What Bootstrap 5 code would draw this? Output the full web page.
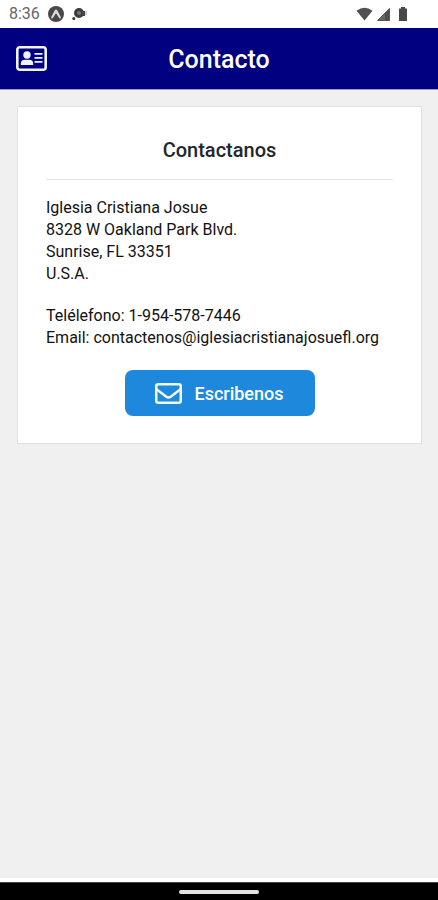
<!DOCTYPE html>
<html lang="es">
<head>
<meta charset="utf-8">
<meta name="viewport" content="width=device-width, initial-scale=1">
<title>Contacto</title>
<link href="https://cdn.jsdelivr.net/npm/bootstrap@5.3.0/dist/css/bootstrap.min.css" rel="stylesheet">
<style>
  body { font-family: Roboto, "Liberation Sans", sans-serif; background: #f0f0f0; color: #111; }
  .status-bar { height: 28px; padding: 0 30px 0 9px; color: #666; font-size: 16px; line-height: 28px; background: #fff; }
  .app-header { height: 62px; background: #000080; border-bottom: 1px solid #9c9ccb; display: grid; grid-template-columns: 32px 1fr 32px; padding: 0 16px; }
  .app-header h1 { font-size: 25px; font-weight: 500; line-height: 32px; padding-top: 2px; }
  .page-body { padding: 16px 16px 16px 17px; }
  .contact-card { border: 1px solid #dfe1e1; padding: 29px 28px 27px; }
  .contact-card h2 { font-size: 20px; font-weight: 500; line-height: 28px; color: #24262b; padding-bottom: 15px; margin-bottom: 17px; border-bottom: 1px solid #e4e4e4; }
  .contact-info { font-size: 16px; line-height: 22px; }
  .write-row { padding-top: 21px; }
  .btn-write { --bs-btn-color: #fff; --bs-btn-bg: #1e88dd; --bs-btn-hover-color: #fff; --bs-btn-hover-bg: #1976c4; --bs-btn-border-radius: 8px; width: 190px; height: 46px; font-size: 18px; font-weight: 500; }
  .nav-strip { height: 18px; background: #000; border-top: 1px solid #444; }
  .home-handle { width: 80px; height: 4px; background: #e4e4e2; }
</style>
<script src="https://cdn.jsdelivr.net/npm/bootstrap@5.3.0/dist/js/bootstrap.bundle.min.js" defer></script>
</head>
<body class="d-flex flex-column min-vh-100">
  <div class="status-bar d-flex align-items-center">
    <span class="me-2">8:36</span>
    <svg class="me-2" width="16" height="16" viewBox="0 0 16 16" aria-hidden="true"><circle cx="8" cy="8" r="8" fill="#484848"/><path d="M3 11.5 6.8 4.3Q8 2.5 9.2 4.3L13 11.5Q12 13.5 10.8 11.6L8 7.5 5.2 11.6Q4 13.5 3 11.5Z" fill="#ddd"/><path d="M8 7.5 9.6 10 8 12.5 6.4 10Z" fill="#484848"/></svg>
    <svg width="16" height="14" viewBox="0 0 16 14" aria-hidden="true"><circle cx="7" cy="6" r="3.5" fill="#777" stroke="#3c3c3c" stroke-width="3"/><circle cx="1.800" cy="11.500" r="1.500" fill="#333"/><path d="M10 4h3v5h-3z" fill="#444"/><path d="M14 4v4" stroke="#aaa"/></svg>
    <svg class="ms-auto" width="17" height="14" viewBox="0 0 17 14" aria-hidden="true"><path d="M.5 3.8Q8.500-2.300 16.500 3.800L8.500 13.500Z" fill="#505050"/></svg>
    <svg class="ms-1" width="13" height="13" viewBox="0 0 13 13" aria-hidden="true"><path d="M12.500.5v12H.5Z" fill="#666"/><path d="M8 5 12.500.5v12H8Z" fill="#505050"/><path d="M12.500.5v12H.5Z" fill="none" stroke="#555"/></svg>
    <svg class="ms-2" width="10" height="14" viewBox="0 0 10 14" aria-hidden="true"><path d="M3 0h4v1.500h2V14H1V1.500h2Z" fill="#484848"/></svg>
  </div>

  <header class="app-header align-items-center text-white">
    <svg width="31" height="25" viewBox="0 0 31 25" role="img" aria-label="Tarjeta de contacto"><rect x="1.300" y="1.300" width="28.400" height="22.400" rx="2.500" fill="none" stroke="#f1f3ff" stroke-width="2.600"/><g fill="#f1f3ff"><circle cx="11" cy="9" r="3.700"/><path d="M4.800 19v-1.300q0-4 4-4h4.400q4 0 4 4V19Z"/><path d="M18.500 7h8v1.800h-8zM18.500 11h8v1.800h-8zM18.500 15h8v1.800h-8z"/></g></svg>
    <h1 class="m-0 text-center">Contacto</h1>
  </header>

  <main class="page-body flex-grow-1">
    <section class="contact-card bg-white">
      <h2 class="text-center">Contactanos</h2>
      <div class="contact-info">
        <address class="mb-0">Iglesia Cristiana Josue<br>8328 W Oakland Park Blvd.<br>Sunrise, FL 33351<br>U.S.A.</address>
        <p class="mt-3 pt-1 mb-0">Telélefono: 1-954-578-7446<br>Email: contactenos@iglesiacristianajosuefl.org</p>
      </div>
      <div class="write-row text-center">
        <button type="button" class="btn btn-write border-0 p-0 d-inline-flex align-items-center justify-content-center gap-2">
          <svg class="me-1" width="27" height="21" viewBox="0 0 27 21" fill="none" stroke="#f2f9ff" stroke-width="2.500" stroke-linejoin="round" aria-hidden="true"><rect x="1.250" y="1.250" width="24.500" height="18.500" rx="2"/><path d="M1.500 6.200 11 13.500Q13.500 15.400 16 13.500L25.500 6.200"/></svg>
          <span>Escribenos</span>
        </button>
      </div>
    </section>
  </main>

  <footer class="border-top border-white border-4">
    <div class="nav-strip d-flex align-items-center justify-content-center"><div class="home-handle rounded-1"></div></div>
  </footer>
</body>
</html>
